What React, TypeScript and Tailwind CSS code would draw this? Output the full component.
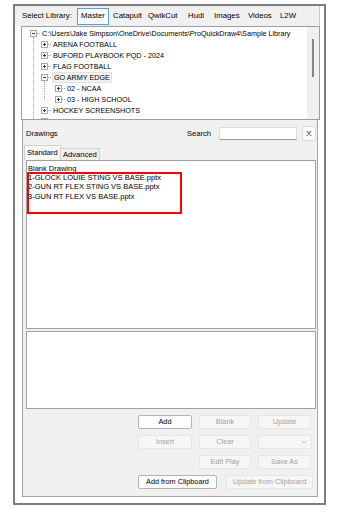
import React from "react";

const tree = [
  { label: "C:\\Users\\Jake Simpson\\OneDrive\\Documents\\ProQuickDraw4\\Sample Library", level: 0, open: true },
  { label: "ARENA FOOTBALL", level: 1 },
  { label: "BUFORD PLAYBOOK PQD - 2024", level: 1 },
  { label: "FLAG FOOTBALL", level: 1 },
  { label: "GO ARMY EDGE", level: 1, open: true, selected: true },
  { label: "02 - NCAA", level: 2 },
  { label: "03 - HIGH SCHOOL", level: 2 },
  { label: "HOCKEY SCREENSHOTS", level: 1 },
  { label: "NCAA 25 FORMAT", level: 1 },
];

const drawings = [
  "Blank Drawing",
  "1-GLOCK LOUIE STING VS BASE.pptx",
  "2-GUN RT FLEX STING VS BASE.pptx",
  "3-GUN RT FLEX VS BASE.pptx",
];

function Expander({ open }: { open?: boolean }) {
  return (
    <svg width="7" height="7" viewBox="0 0 7 7" className="shrink-0">
      <rect x="0.5" y="0.5" width="6" height="6" fill="#fafafa" stroke="#a8a8a8" />
      <line x1="2" y1="3.5" x2="5" y2="3.5" stroke="#3a3a3a" />
      {!open && <line x1="3.5" y1="2" x2="3.5" y2="5" stroke="#3a3a3a" />}
    </svg>
  );
}

function Btn({ label, w, enabled }: { label: string; w: string; enabled?: boolean }) {
  return (
    <div
      className={`${w} h-[14px] flex items-center justify-center rounded-[2px] border text-[7.3px] ${
        enabled
          ? "bg-[#fdfdfd] border-[#b4b4b4] text-black"
          : "bg-[#f6f6f6] border-[#e6e6e6] text-[#a3a3a3]"
      }`}
    >
      {label}
    </div>
  );
}

export default function App() {
  return (
    <main className="w-[345px] h-[516px] bg-white pl-[13px] pt-[4px] font-['Liberation_Sans',Arial,sans-serif] leading-none text-black">
      <div className="w-[313px] h-[501px] border-2 border-[#7d7d7d] bg-white flex flex-col">
        {/* library selector */}
        <div className="w-[305px] h-[20px] bg-[#f0f0f0] border-r border-[#c8c8c8] flex items-center pl-[7px] text-[7.8px]">
          <span className="w-[55px]">Select Library:</span>
          <span className="w-[32px] h-[17px] flex items-center justify-center border border-[#5a9ddb] bg-[#f7fbff]">
            Master
          </span>
          <span className="w-[39px] pl-[4px]">Catapult</span>
          <span className="w-[40px]">QwikCut</span>
          <span className="w-[26px]">Hudl</span>
          <span className="w-[34px]">Images</span>
          <span className="w-[32px]">Videos</span>
          <span>L2W</span>
        </div>

        {/* folder tree */}
        <div className="ml-[6px] w-[299px] h-[94px] border border-[#9a9ea6] bg-white flex overflow-hidden">
          <div className="relative flex-1 pt-[1px] text-[7.2px] overflow-hidden">
            <div className="absolute left-[11px] top-[10px] h-[84px] border-l border-dotted border-[#a0a0a0]" />
            <div className="absolute left-[22px] top-[54px] h-[18px] border-l border-dotted border-[#a0a0a0]" />
            {tree.map((t) => (
              <div
                key={t.label}
                className={`relative h-[11px] flex items-center ${
                  t.level === 0 ? "pl-[8px]" : t.level === 1 ? "pl-[19px]" : "pl-[33px]"
                }`}
              >
                <Expander open={t.open} />
                <span className="w-[3px] border-t border-dotted border-[#a0a0a0]" />
                <span
                  className={`ml-[1px] px-[1px] h-[11px] flex items-center whitespace-nowrap ${
                    t.selected ? "bg-[#f2f2f2] border border-[#e2e2e2]" : ""
                  }`}
                >
                  {t.label}
                </span>
              </div>
            ))}
          </div>
          <div className="w-[12px] bg-[#f0f0f0] flex justify-center pt-[12px]">
            <div className="w-[2px] h-[38px] bg-[#858585]" />
          </div>
        </div>

        {/* drawings panel */}
        <div className="ml-[7px] w-[296px] flex-1 mb-[6px] bg-[#f0f0f0] border border-t-0 border-[#a5a5a5] flex flex-col">
          <div className="mt-[6px] h-[15px] flex items-center text-[7.6px]">
            <span className="pl-[3px]">Drawings</span>
            <span className="ml-auto">Search</span>
            <div className="ml-[8px] w-[78px] h-[13px] bg-white border border-[#dcdcdc] border-b-[#9a9a9a]" />
            <div className="ml-[5px] mr-[1px] w-[14px] h-[15px] bg-[#fbfbfb] border border-[#dadada] rounded-[2px] flex items-center justify-center text-[8px] text-[#333]">
              X
            </div>
          </div>

          <div className="mt-[4px] h-[15px] pl-[1px] flex items-end text-[7.6px]">
            <div className="w-[37px] h-[15px] bg-[#f7f7f7] border border-b-0 border-[#d0d0d0] flex items-center pl-[2px]">
              Standard
            </div>
            <div className="w-[39px] h-[12px] bg-[#f0f0f0] border border-b-0 border-l-0 border-[#d0d0d0] flex items-center pl-[2px]">
              Advanced
            </div>
          </div>

          <div className="pl-[3px] pr-[1px] flex flex-col gap-[2px]">
            <div className="relative h-[169px] bg-white border border-[#a0a0a0] pt-[3px] pl-[1px] text-[7.5px]">
              {drawings.map((d) => (
                <div key={d} className="h-[9.3px] flex items-center whitespace-nowrap">
                  {d}
                </div>
              ))}
              <div className="absolute left-0 top-[11px] w-[155px] h-[42px] border-2 border-[#ff0000]" />
            </div>
            <div className="h-[78px] bg-white border border-[#a0a0a0]" />
          </div>

          <div className="mt-[6px] pl-[115px] flex flex-col gap-[6px]">
            <div className="flex gap-[7px]">
              <Btn label="Add" w="w-[54px]" enabled />
              <Btn label="Blank" w="w-[52px]" />
              <Btn label="Update" w="w-[53px]" />
            </div>
            <div className="flex gap-[7px]">
              <Btn label="Insert" w="w-[54px]" />
              <Btn label="Clear" w="w-[52px]" />
              <div className="w-[54px] h-[14px] rounded-[2px] border border-[#e6e6e6] bg-[#f6f6f6] flex items-center justify-end pr-[4px]">
                <svg width="6" height="4" viewBox="0 0 6 4">
                  <path d="M0.5 0.5 L3 3 L5.5 0.5" fill="none" stroke="#b0b0b0" strokeWidth="0.8" />
                </svg>
              </div>
            </div>
            <div className="flex gap-[7px] pl-[61px]">
              <Btn label="Edit Play" w="w-[52px]" />
              <Btn label="Save As" w="w-[53px]" />
            </div>
            <div className="flex gap-[9px]">
              <Btn label="Add from Clipboard" w="w-[79px]" enabled />
              <Btn label="Update from Clipboard" w="w-[87px]" />
            </div>
          </div>
        </div>
      </div>
    </main>
  );
}
